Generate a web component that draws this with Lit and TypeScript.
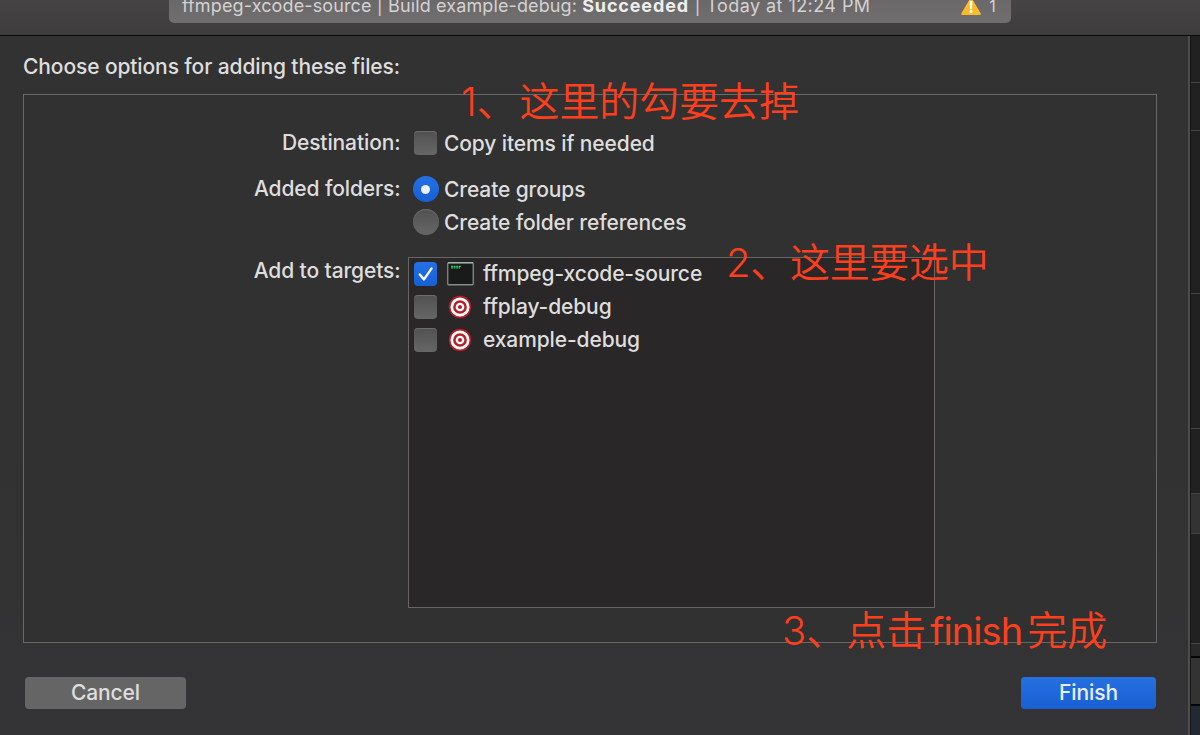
import { LitElement, html, css, svg } from "lit";
import { customElement, property, state } from "lit/decorators.js";
import { classMap } from "lit/directives/class-map.js";

const warningIcon = html`<svg width="22" height="18" viewBox="0 0 22 18">
  <path d="M9.7 1.2Q11 -.8 12.3 1.2L20.6 15.3Q21.3 17 19.5 17H2.5Q.7 17 1.4 15.3Z" fill="#fcbc2a" />
  <path d="M9.6 3h2.8l-.5 8.2h-1.8Z" fill="#fff" />
  <circle cx="11" cy="13.6" r="1.5" fill="#fff" />
</svg>`;

const terminalIcon = html`<svg width="27" height="24" viewBox="0 0 27 24">
  <rect x=".75" y=".75" width="25.5" height="22" rx="1" fill="#181b1a" stroke="#858c8a" stroke-width="1.3" />
  <path d="M1 .8h25" stroke="#abc4b8" stroke-width="1" />
  <path d="M4 4.4h10M4 5.8h9" stroke="#32c75a" stroke-width="1.3" stroke-dasharray="2 .6" />
</svg>`;

const targetIcon = html`<svg width="24" height="24" viewBox="0 0 24 24">
  <circle cx="12" cy="12" r="11.2" fill="#b81d25" />
  <circle cx="12" cy="12" r="8.2" fill="none" stroke="#fff" stroke-width="2.7" />
  <circle cx="12" cy="12" r="3.2" fill="#b81d25" stroke="#fff" stroke-width="2.3" />
</svg>`;

const checkMark = svg`<path d="M5.8 12.4L10 17.4L17.6 6.4" fill="none" stroke="#f4f7fe" stroke-width="2.4" stroke-linecap="round" stroke-linejoin="round" />`;

@customElement("mac-toggle")
class MacToggle extends LitElement {
  @property() kind = "check";
  @property({ type: Boolean }) on = false;
  static styles = css`
    :host { display: flex; width: 25px; height: 26px; align-items: center; justify-content: center; flex: none; }
    .box { width: 23px; height: 24px; flex: none; border-radius: 4px; background: linear-gradient(#525152, #676667); box-shadow: inset 0 1px 0 #6d6c6d; }
    .radio { width: 26px; height: 26px; border-radius: 50%; display: flex; align-items: center; justify-content: center; }
    .on { background: linear-gradient(#2470e4, #175fd5); box-shadow: none; }
    .dot { width: 9px; height: 9px; border-radius: 50%; background: #eaf0fc; }
    svg { display: block; }
  `;
  render() {
    return html`<div class=${classMap({ box: true, radio: this.kind === "radio", on: this.on })}>
      ${this.on
        ? this.kind === "radio"
          ? html`<div class="dot"></div>`
          : html`<svg width="23" height="24" viewBox="0 0 23 24">${checkMark}</svg>`
        : ""}
    </div>`;
  }
}

@customElement("app-root")
class AppRoot extends LitElement {
  @state() targets = [
    { name: "ffmpeg-xcode-source", icon: terminalIcon, on: true },
    { name: "ffplay-debug", icon: targetIcon, on: false },
    { name: "example-debug", icon: targetIcon, on: false },
  ];
  static styles = css`
    * { box-sizing: border-box; }
    :host { display: flex; flex-direction: column; position: relative; width: 1200px; height: 735px; overflow: hidden;
      background: #323232; color: #dfdede; font: 450 21px/26px Inter, "Noto Sans", sans-serif; letter-spacing: -0.11px; white-space: nowrap; }
    .toolbar { height: 36px; flex: none; border-bottom: 1px solid #0b0b0b; background: linear-gradient(#464445, #3d3b3c); padding-left: 169px; }
    .status { width: 842px; height: 23px; border-radius: 0 0 5px 5px; background: linear-gradient(#6a6869, #706e6f);
      display: flex; align-items: flex-start; padding: 0 14px 0 13px; font-size: 18px; font-weight: 400; line-height: 12px; color: #d4d2d3; letter-spacing: .12px; }
    .status b { color: #efeeee; letter-spacing: .85px; }
    .status .when { letter-spacing: .44px; }
    .status svg { display: block; margin-top: -2px; }
    .issues { margin-left: auto; display: flex; gap: 7px; position: relative; left: -1px; }
    .issues span { font-size: 16px; line-height: 13px; }
    .body { flex: 1; display: flex; min-height: 0; }
    .sheet { width: 1190px; border-right: 2px solid #4e4d4e; padding: 18px 31px 0 23px; display: flex; flex-direction: column;
      background: linear-gradient(#333232, #323232 60%, #343436); }
    .group { margin-top: 14px; width: 1134px; height: 549px; border: 1px solid #686868; background: #313131; padding: 35px 1px 0;
      display: grid; grid-template-columns: 375.5px 527px; column-gap: 7.5px; grid-template-rows: 46px 81px 351px; }
    .label { text-align: right; }
    .label.low { padding-top: 1px; }
    .option { display: flex; gap: 6px; align-items: center; height: 26px; padding-left: 5px; margin-bottom: 7px; }
    .option span { padding-top: 2px; }
    .list { border: 1px solid #656565; background: #292728; padding: 3px 0 0 4px; }
    .target { display: flex; align-items: center; height: 26px; margin-bottom: 7px; }
    .icon { width: 26px; margin: 0 10px 0 9px; display: flex; justify-content: center; }
    .icon svg { flex: none; }
    .buttons { display: flex; justify-content: space-between; margin-top: 34px; padding: 0 1px 0 2px; }
    .button { height: 32px; border-radius: 4px; display: flex; align-items: center; justify-content: center; background: #666566; width: 161px; }
    .primary { width: 135px; background: linear-gradient(#2670e2, #195fd2); color: #e9effc; }
    .strip { flex: 1; display: flex; flex-direction: column; background: #222121; border-left: 1px solid #151515; }
    .strip div { border-bottom: 1px solid #444343; flex: none; }
    .strip .raised { background: #343334; }
    .strip .dark { border-bottom: 2px solid #050505; background: #2a2929; }
    .strip .dark.raised { background: #343334; }
    .strip .dock { flex: 1; border: 0; background: #222932; }
    .note { position: absolute; color: #fe3f1d; font: 350 40px/48px Inter, "Noto Sans CJK SC", sans-serif; letter-spacing: 0; }
    .n1 { left: 461px; top: 78px; letter-spacing: -.1px; }
    .n1 span { margin-left: 3px; }
    .n2 { left: 726px; top: 239px; letter-spacing: -.3px; }
    .n3 { left: 782px; top: 607px; }
    .n3 .latin { font-size: 38px; font-weight: 400; letter-spacing: -.9px; margin: 0 5px 0 4px; }
  `;
  render() {
    return html`
      <div class="toolbar">
        <div class="status">
          <span>ffmpeg-xcode-source | Build example-debug: <b>Succeeded</b><span class="when"> | Today at 12:24 PM</span></span>
          <div class="issues">${warningIcon}<span>1</span></div>
        </div>
      </div>
      <div class="body">
        <div class="sheet">
          <div>Choose options for adding these files:</div>
          <div class="group">
            <div class="label">Destination:</div>
            <div><div class="option"><mac-toggle></mac-toggle><span>Copy items if needed</span></div></div>
            <div class="label">Added folders:</div>
            <div>
              <div class="option"><mac-toggle kind="radio" on></mac-toggle><span>Create groups</span></div>
              <div class="option"><mac-toggle kind="radio"></mac-toggle><span>Create folder references</span></div>
            </div>
            <div class="label low">Add to targets:</div>
            <div class="list">
              ${this.targets.map((t) => html`<div class="target">
                <mac-toggle ?on=${t.on}></mac-toggle><div class="icon">${t.icon}</div><span>${t.name}</span>
              </div>`)}
            </div>
          </div>
          <div class="buttons"><div class="button">Cancel</div><div class="button primary">Finish</div></div>
        </div>
        <div class="strip">
          ${[
            [47, ""], [48, ""], [163, ""], [135, ""], [65, ""], [40, "raised"], [110, ""], [14, "dark"], [48, "dark raised"],
          ].map(([h, c]) => html`<div class=${c} style="height:${h}px"></div>`)}
          <div class="dock"></div>
        </div>
      </div>
      <div class="note n1">1、<span>这里的勾要去掉</span></div>
      <div class="note n2">2、这里要选中</div>
      <div class="note n3">3、点击<span class="latin">finish</span>完成</div>
    `;
  }
}
